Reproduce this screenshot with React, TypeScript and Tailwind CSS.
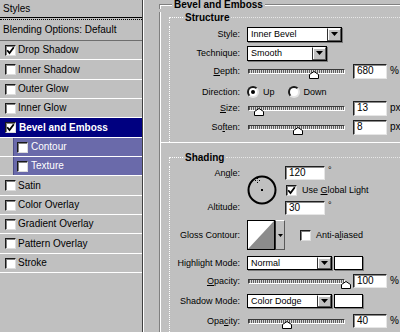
import React from 'react';

type RowKind = 'blend' | 'normal' | 'sel' | 'sub';
interface StyleItem {
  label: string;
  h: string;
  kind: RowKind;
  checked?: boolean;
}

const items: StyleItem[] = [
  { label: 'Blending Options: Default', h: 'h-[21px]', kind: 'blend' },
  { label: 'Drop Shadow', h: 'h-[19px]', kind: 'normal', checked: true },
  { label: 'Inner Shadow', h: 'h-[20px]', kind: 'normal' },
  { label: 'Outer Glow', h: 'h-[19px]', kind: 'normal' },
  { label: 'Inner Glow', h: 'h-[19px]', kind: 'normal' },
  { label: 'Bevel and Emboss', h: 'h-[20px]', kind: 'sel', checked: true },
  { label: 'Contour', h: 'h-[19px]', kind: 'sub' },
  { label: 'Texture', h: 'h-[19px]', kind: 'sub' },
  { label: 'Satin', h: 'h-[20px]', kind: 'normal' },
  { label: 'Color Overlay', h: 'h-[19px]', kind: 'normal' },
  { label: 'Gradient Overlay', h: 'h-[19px]', kind: 'normal' },
  { label: 'Pattern Overlay', h: 'h-[20px]', kind: 'normal' },
  { label: 'Stroke', h: 'h-[19px]', kind: 'normal' },
];

function CheckMark() {
  return (
    <svg width="9" height="9" viewBox="0 0 9 9" className="block">
      <path d="M1.2 4.2 L3.5 7 L7.8 1.2" fill="none" stroke="#000" strokeWidth="1.8" />
    </svg>
  );
}

function Checkbox({ checked = false }: { checked?: boolean }) {
  return (
    <span className="flex shrink-0 items-center justify-center w-[11px] h-[11px] bg-white border border-t-[#1a1a1a] border-l-[#1a1a1a] border-r-[#dcdcdc] border-b-[#dcdcdc] shadow-[inset_1px_1px_0_#808080]">
      {checked ? <CheckMark /> : null}
    </span>
  );
}

function StyleRow({ r }: { r: StyleItem }) {
  if (r.kind === 'blend') {
    return (
      <div className={`flex items-center ${r.h} border-b border-[#6e6e6e] pl-[3px] whitespace-nowrap`}>
        {r.label}
      </div>
    );
  }
  if (r.kind === 'sel') {
    return (
      <div className={`flex items-center ${r.h} border-b border-white bg-[#000080] pl-[5px] gap-[3px] text-white font-bold whitespace-nowrap`}>
        <Checkbox checked />
        <span>{r.label}</span>
      </div>
    );
  }
  if (r.kind === 'sub') {
    return (
      <div className={`flex ${r.h} border-b border-white`}>
        <div className="ml-[13px] flex-1 flex items-center bg-[#6a6aaa] border-l border-[#50508a] pl-[3px] gap-[3px] text-white whitespace-nowrap">
          <Checkbox />
          <span>{r.label}</span>
        </div>
      </div>
    );
  }
  return (
    <div className={`flex items-center ${r.h} border-b border-white pl-[5px] gap-[2px] whitespace-nowrap`}>
      <Checkbox checked={r.checked} />
      <span>{r.label}</span>
    </div>
  );
}

function Tri({ w = 7, h = 4 }: { w?: number; h?: number }) {
  return (
    <svg width={w} height={h} viewBox={`0 0 ${w} ${h}`} className="block">
      <path d={`M0 0 H${w} L${w / 2} ${h} Z`} fill="#000" />
    </svg>
  );
}

function Select({ value, w, h = 'h-[15px]' }: { value: string; w: string; h?: string }) {
  return (
    <div className={`flex items-center ${w} ${h} bg-white border border-black shadow-[1px_1px_0_#7a7a7a]`}>
      <span className="flex-1 pl-[3px] text-[9px] leading-none whitespace-nowrap">{value}</span>
      <span className="flex items-center justify-center w-[14px] h-full bg-[#c0c0c0] border border-t-white border-l-[#303030] border-r-[#5a5a5a] border-b-[#5a5a5a] shadow-[inset_1px_1px_0_#fff]">
        <Tri />
      </span>
    </div>
  );
}

function NumInput({ value, w = 'w-[34px]', h = 'h-[15px]' }: { value: string; w?: string; h?: string }) {
  return (
    <div className={`${w} ${h} shrink-0 bg-white border border-t-[#202020] border-l-[#202020] border-r-[#e6e6e6] border-b-[#e6e6e6] shadow-[inset_1px_1px_0_#8a8a8a] pl-[3px] flex items-center text-[10px] leading-none`}>
      {value}
    </div>
  );
}

function Slider({ pos }: { pos: number }) {
  return (
    <div className="relative w-[97px] h-[16px] ml-[1px] shrink-0">
      <div className="mt-[6px] w-full h-[5px] border border-t-[#3a3a3a] border-l-[#3a3a3a] border-r-white border-b-white bg-[repeating-linear-gradient(90deg,#5e5e5e_0px,#5e5e5e_1px,#d6d6d6_1px,#d6d6d6_2px)]" />
      <svg className="absolute top-[8px]" style={{ left: pos - 5 }} width="10" height="8" viewBox="0 0 10 8">
        <path d="M0.5 7.5 V3.5 L5 0.5 L9.5 3.5 V7.5 Z" fill="#fff" stroke="#000" />
      </svg>
    </div>
  );
}

function Radio({ checked = false }: { checked?: boolean }) {
  return (
    <span className="flex shrink-0 items-center justify-center w-[12px] h-[12px] rounded-full bg-white border-2 border-t-[#1a1a1a] border-l-[#1a1a1a] border-r-[#e4e4e4] border-b-[#e4e4e4]">
      {checked ? <span className="w-[4px] h-[4px] rounded-full bg-black" /> : null}
    </span>
  );
}

function Swatch() {
  return <div className="ml-[2px] w-[29px] h-[14px] bg-white border border-black shadow-[1px_1px_0_#7a7a7a]" />;
}

function FormRow({ label, mt, h = 'h-[16px]', children }: { label: React.ReactNode; mt: string; h?: string; children: React.ReactNode }) {
  return (
    <div className={`flex items-center ${h} ${mt}`}>
      <div className="w-[70px] shrink-0 text-right whitespace-nowrap">{label}</div>
      <div className="ml-[7px] flex items-center">{children}</div>
    </div>
  );
}

function Unit({ children }: { children: React.ReactNode }) {
  return <span className="ml-[3px] text-[10px]">{children}</span>;
}

function SubGroupHeader({ title }: { title: string }) {
  return (
    <div className="flex h-[11px] items-center">
      <div className="w-[14px] h-[6px] self-end border-t border-l border-dotted border-white" />
      <span className="px-[2px] font-bold text-[10px] leading-[11px] whitespace-nowrap">{title}</span>
      <div className="flex-1 h-[6px] self-end border-t border-dotted border-[#e8e8e8]" />
    </div>
  );
}

function AngleCircle() {
  return (
    <svg width="30" height="30" viewBox="0 0 30 30" className="block">
      <circle cx="15" cy="15" r="13.5" fill="none" stroke="#000" strokeWidth="2" />
      <rect x="14" y="14" width="2" height="2" fill="#000" />
      <rect x="10" y="3" width="1" height="1" fill="#000" />
      <rect x="10" y="7" width="1" height="1" fill="#000" />
      <rect x="8" y="5" width="1" height="1" fill="#000" />
      <rect x="12" y="5" width="1" height="1" fill="#000" />
      <rect x="10" y="5" width="1" height="1" fill="#777" />
    </svg>
  );
}

function GlossContour() {
  return (
    <div className="flex h-[30px]">
      <div className="w-[28px] h-[30px] border border-black bg-white">
        <svg width="26" height="28" viewBox="0 0 26 28" className="block">
          <polygon points="0,28 26,0 26,28" fill="#8c8c8c" />
        </svg>
      </div>
      <div className="w-[10px] h-[30px] bg-[#c0c0c0] border border-t-white border-l-[#303030] border-r-[#5a5a5a] border-b-[#5a5a5a] flex items-center justify-center">
        <Tri w={5} h={3} />
      </div>
    </div>
  );
}

export default function App() {
  return (
    <div className="w-[400px] h-[332px] overflow-hidden bg-[#c0c0c0] flex text-black font-['Liberation_Sans',Arial,sans-serif]">
      {/* Left styles list */}
      <div className="w-[143px] shrink-0 border-r border-[#404040] text-[10px] leading-none">
        <div className="h-[18px] flex items-center pl-[3px] border-b border-black">Styles</div>
        <div className="h-[2px] border-b border-dotted border-black" />
        {items.map((r) => (
          <StyleRow key={r.label} r={r} />
        ))}
      </div>

      {/* Right options */}
      <div className="flex-1 min-w-0 border-l border-white pl-[15px] text-[9px] leading-none">
        {/* Outer group header */}
        <div className="flex h-[9px] items-center">
          <div className="w-[13px] h-[5px] self-end border-t border-l border-[#808080] shadow-[inset_1px_1px_0_#fff]" />
          <span className="px-[2px] font-bold text-[10px] leading-[9px] whitespace-nowrap">Bevel and Emboss</span>
          <div className="flex-1 h-[5px] self-end border-t border-[#808080] shadow-[inset_0_1px_0_#fff]" />
        </div>
        <div className="border-l border-[#808080] shadow-[inset_1px_0_0_#fff] pl-[9px] h-[323px]">
          {/* Structure */}
          <div className="mt-[3px]">
            <SubGroupHeader title="Structure" />
            <div className="border-l border-dotted border-white">
              <FormRow label="Style:" mt="mt-[3px]">
                <Select value="Inner Bevel" w="w-[95px]" />
              </FormRow>
              <FormRow label="Technique:" mt="mt-[3px]">
                <Select value="Smooth" w="w-[80px]" />
              </FormRow>
              <FormRow label={<><span className="underline underline-offset-1">D</span>epth:</>} mt="mt-[2px]">
                <Slider pos={66} />
                <div className="ml-[8px]"><NumInput value="680" /></div>
                <Unit>%</Unit>
              </FormRow>
              <FormRow label="Direction:" mt="mt-[5px]">
                <Radio checked />
                <span className="ml-[4px]">Up</span>
                <span className="ml-[13px]"><Radio /></span>
                <span className="ml-[4px]">Down</span>
              </FormRow>
              <FormRow label={<><span className="underline underline-offset-1">S</span>ize:</>} mt="mt-[0px]">
                <Slider pos={11} />
                <div className="ml-[8px]"><NumInput value="13" /></div>
                <Unit>px</Unit>
              </FormRow>
              <FormRow label={<>So<span className="underline underline-offset-1">f</span>ten:</>} mt="mt-[3px]">
                <Slider pos={50} />
                <div className="ml-[8px]"><NumInput value="8" /></div>
                <Unit>px</Unit>
              </FormRow>
              <div className="h-[7px]" />
            </div>
          </div>
          <div className="-ml-[9px] h-px bg-white" />

          {/* Shading */}
          <div className="mt-[9px]">
            <SubGroupHeader title="Shading" />
            <div className="border-l border-dotted border-white h-[200px]">
              <div className="flex mt-[3px]">
                <div className="w-[70px] shrink-0 text-right flex flex-col">
                  <div className="h-[14px] leading-[14px]">An<span className="underline underline-offset-1">g</span>le:</div>
                  <div className="h-[14px] leading-[14px] mt-[20px]">Altitude:</div>
                </div>
                <div className="ml-[7px] mt-[9px]">
                  <AngleCircle />
                </div>
                <div className="ml-[8px] flex flex-col">
                  <div className="flex items-start">
                    <NumInput value="120" w="w-[40px]" h="h-[14px]" />
                    <span className="ml-[3px] text-[9px] leading-[8px]">°</span>
                  </div>
                  <div className="flex items-center mt-[4px] h-[12px] pl-[1px]">
                    <Checkbox checked />
                    <span className="ml-[5px] whitespace-nowrap">Use <span className="underline underline-offset-1">G</span>lobal Light</span>
                  </div>
                  <div className="flex items-start mt-[5px]">
                    <NumInput value="30" w="w-[40px]" h="h-[14px]" />
                    <span className="ml-[3px] text-[9px] leading-[8px]">°</span>
                  </div>
                </div>
              </div>

              <FormRow label="Gloss Contour:" mt="mt-[5px]" h="h-[30px]">
                <GlossContour />
                <span className="ml-[15px]"><Checkbox /></span>
                <span className="ml-[5px] whitespace-nowrap">Anti-a<span className="underline underline-offset-1">l</span>iased</span>
              </FormRow>

              <FormRow label="Highlight Mode:" mt="mt-[6px]" h="h-[14px]">
                <Select value="Normal" w="w-[85px]" h="h-[14px]" />
                <Swatch />
              </FormRow>
              <FormRow label={<><span className="underline underline-offset-1">O</span>pacity:</>} mt="mt-[4px]" h="h-[14px]">
                <Slider pos={98} />
                <div className="ml-[8px]"><NumInput value="100" h="h-[14px]" /></div>
                <Unit>%</Unit>
              </FormRow>
              <FormRow label="Shadow Mode:" mt="mt-[6px]" h="h-[14px]">
                <Select value="Color Dodge" w="w-[85px]" h="h-[14px]" />
                <Swatch />
              </FormRow>
              <FormRow label={<>Opa<span className="underline underline-offset-1">c</span>ity:</>} mt="mt-[6px]" h="h-[14px]">
                <Slider pos={39} />
                <div className="ml-[8px]"><NumInput value="40" h="h-[14px]" /></div>
                <Unit>%</Unit>
              </FormRow>
            </div>
          </div>
        </div>
      </div>
    </div>
  );
}
